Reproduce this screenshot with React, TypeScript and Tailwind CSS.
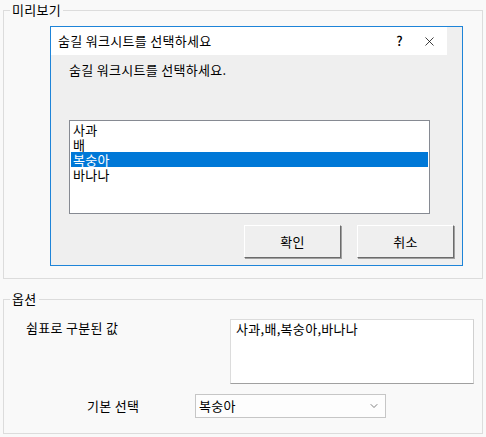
import { X, ChevronDown } from "lucide-react";

const font = { fontFamily: '"Noto Sans CJK KR", "Noto Sans", sans-serif' };

const items = ["사과", "배", "복숭아", "바나나"];

function GroupBox({
  label,
  className,
  children,
}: {
  label: string;
  className: string;
  children: React.ReactNode;
}) {
  return (
    <div className={`relative ml-[3px] w-[480px] border border-[#dcdcdc] ${className}`}>
      <span className="absolute left-[6px] top-[-10px] bg-[#f9f9f9] px-[2px] text-[13px] leading-[18px] tracking-[0.3px] text-black">
        {label}
      </span>
      {children}
    </div>
  );
}

function DialogButton({ label }: { label: string }) {
  return (
    <button className="flex h-[33px] w-[97px] items-center justify-center border border-t-white border-l-white border-r-[#6b6b6b] border-b-[#6b6b6b] bg-[#efefef] text-[13px] tracking-[0.3px] text-black shadow-[1px_1px_0_#a0a0a0]">
      {label}
    </button>
  );
}

export default function App() {
  return (
    <div className="h-[437px] w-[486px] overflow-hidden bg-[#f9f9f9] pt-[10px]" style={font}>
      <GroupBox label="미리보기" className="h-[269px]">
        <div className="ml-[46px] mt-[15px] flex h-[240px] w-[413px] flex-col border border-[#1e84d8] bg-[#efefef]">
          <div className="flex h-[28px] w-[396px] items-center bg-white pl-[7px] text-[13px] tracking-[0.3px] text-black">
            <span className="flex-1">숨길 워크시트를 선택하세요</span>
            <span className="mr-[19px] text-[13px] font-medium">?</span>
            <X className="mr-[10px] h-[15px] w-[15px]" strokeWidth={1.2} />
          </div>
          <div className="pl-[18px] pt-[6px] text-[13px] leading-[18px] tracking-[0.3px] text-black">
            숨길 워크시트를 선택하세요.
          </div>
          <div className="ml-[18px] mt-[41px] h-[94px] w-[361px] border border-[#868a92] bg-white p-px">
            {items.map((it, i) => (
              <div
                key={it}
                className={`h-[15px] pl-[2px] text-[13px] leading-[15px] tracking-[0.3px] ${
                  i === 2 ? "bg-[#0078d7] text-white" : "text-black"
                }`}
              >
                {it}
              </div>
            ))}
          </div>
          <div className="ml-[193px] mt-[11px] flex gap-[16px]">
            <DialogButton label="확인" />
            <DialogButton label="취소" />
          </div>
        </div>
      </GroupBox>

      <GroupBox label="옵션" className="mt-[20px] h-[135px]">
        <div className="flex pt-[19px] text-[13px] tracking-[0.3px] text-black">
          <span className="ml-[22px] w-[204px] leading-[18px]">쉼표로 구분된 값</span>
          <div className="h-[65px] w-[244px] border border-[#dcdcdc] border-b-[#a0a0a0] border-r-[#d0d0d0] bg-white px-[5px] leading-[18px]">
            사과,배,복숭아,바나나
          </div>
        </div>
        <div className="mt-[10px] flex items-center text-[13px] tracking-[0.3px] text-black">
          <span className="ml-[83px] w-[108px]">기본 선택</span>
          <div className="flex h-[24px] w-[191px] items-center justify-between border border-[#c6c6c6] bg-[#fdfdfd] pl-[3px] pr-[5px]">
            <span>복숭아</span>
            <ChevronDown className="h-[12px] w-[12px] text-[#555]" strokeWidth={1.5} />
          </div>
        </div>
      </GroupBox>
    </div>
  );
}
